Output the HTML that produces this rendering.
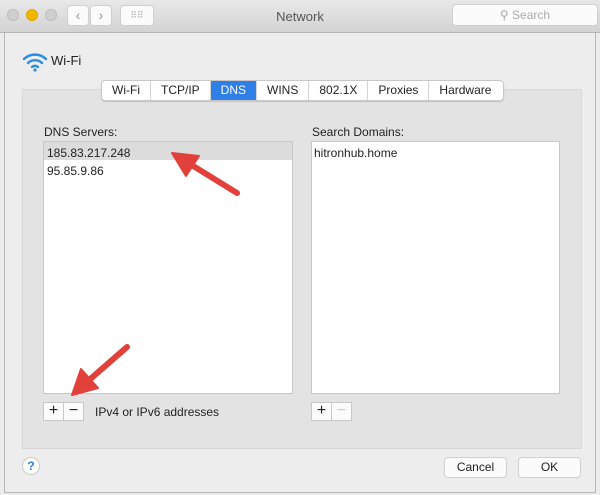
<!DOCTYPE html><html><head><style>
body{margin:0;width:600px;height:495px;overflow:hidden;background:#ececec;font-family:"Liberation Sans",sans-serif;font-size:12px;color:#222;position:relative}
.a{position:absolute}
.tb{left:0;top:0;width:600px;height:32px;background:linear-gradient(#e8e8e8,#d3d3d3);border-bottom:1px solid #b5b5b5}
.dot{width:12px;height:12px;border-radius:50%;top:9px;background:#cfcfcf;border:1px solid #bdbdbd;box-sizing:border-box}
.btn{background:#fbfbfb;border:1px solid #d0d0d0;border-radius:4px;box-sizing:border-box}
.sheet{left:4px;top:33px;width:592px;height:460px;background:#ededed;border:1px solid #b8b8b8;border-top:none;box-sizing:border-box}
.box{left:22px;top:89px;width:560px;height:360px;background:#e3e3e3;border:1px solid #d8d8d8;box-sizing:border-box}
.tabs{left:101px;top:80px;height:19px;display:flex;background:#fff;border:1px solid #c8c8c8;border-radius:4px;overflow:hidden;box-shadow:0 1px 1px rgba(0,0,0,.15)}
.tabs div{padding:0 10px;line-height:19px;border-right:1px solid #d5d5d5;font-size:12px}
.list{background:#fff;border:1px solid #c8c8c8;box-sizing:border-box}
.pm{width:21px;height:19px;background:#fbfbfb;border:1px solid #c8c8c8;box-sizing:border-box;text-align:center;line-height:16px;font-size:16px}
</style></head><body>
<div class="a tb"></div>
<div class="a dot" style="left:7px"></div>
<div class="a dot" style="left:26px;background:#f5b800;border-color:#dda200"></div>
<div class="a dot" style="left:45px"></div>
<div class="a btn" style="left:67px;top:5px;width:22px;height:21px;color:#999;text-align:center;line-height:19px;font-size:14px">&#8249;</div>
<div class="a btn" style="left:90px;top:5px;width:22px;height:21px;color:#999;text-align:center;line-height:19px;font-size:14px">&#8250;</div>
<div class="a btn" style="left:120px;top:5px;width:34px;height:21px;color:#aaa;text-align:center;line-height:19px;font-size:9px">⠿⠿</div>
<div class="a" style="left:0;width:600px;top:9px;text-align:center;color:#555;font-size:13px">Network</div>
<div class="a btn" style="left:452px;top:4px;width:146px;height:22px;color:#aaa;text-align:center;line-height:21px;font-size:12px">&#9906; Search</div>
<div class="a sheet"></div>
<svg class="a" style="left:22px;top:52px" width="26" height="20" viewBox="0 0 26 20"><g fill="none" stroke="#2a8ce0" stroke-width="2.4" stroke-linecap="round"><path d="M2 7a16 16 0 0 1 22 0"/><path d="M6 11a10 10 0 0 1 14 0"/><path d="M10 15a4.5 4.5 0 0 1 6 0"/></g><circle cx="13" cy="18" r="1.6" fill="#2a8ce0"/></svg>
<div class="a" style="left:51px;top:53px;font-size:13px">Wi-Fi</div>
<div class="a box"></div>
<div class="a tabs"><div>Wi-Fi</div><div>TCP/IP</div><div style="background:#2f7fe6;color:#fff">DNS</div><div>WINS</div><div>802.1X</div><div>Proxies</div><div style="border:none;padding:0 12px 0 10px">Hardware</div></div>
<div class="a" style="left:44px;top:125px">DNS Servers:</div>
<div class="a" style="left:312px;top:125px">Search Domains:</div>
<div class="a list" style="left:43px;top:141px;width:250px;height:253px"></div>
<div class="a" style="left:44px;top:142px;width:248px;height:18px;background:#dcdcdc"></div>
<div class="a" style="left:47px;top:146px">185.83.217.248</div>
<div class="a" style="left:47px;top:164px">95.85.9.86</div>
<div class="a list" style="left:311px;top:141px;width:249px;height:253px"></div>
<div class="a" style="left:314px;top:146px">hitronhub.home</div>
<div class="a pm" style="left:43px;top:402px">+</div>
<div class="a pm" style="left:63px;top:402px">−</div>
<div class="a" style="left:95px;top:405px">IPv4 or IPv6 addresses</div>
<div class="a pm" style="left:311px;top:402px">+</div>
<div class="a pm" style="left:331px;top:402px;color:#ccc">−</div>
<div class="a" style="left:22px;top:457px;width:18px;height:18px;border-radius:50%;background:#fff;border:1px solid #c8c8c8;box-sizing:border-box;color:#2a7de0;text-align:center;line-height:16px;font-size:12px;font-weight:bold">?</div>
<div class="a btn" style="left:444px;top:457px;width:63px;height:21px;text-align:center;line-height:19px">Cancel</div>
<div class="a btn" style="left:518px;top:457px;width:63px;height:21px;text-align:center;line-height:19px">OK</div>
<svg class="a" style="left:0;top:0" width="600" height="495"><g fill="#e2403a" stroke="#e2403a" stroke-linecap="round" stroke-linejoin="round"><line x1="237" y1="193" x2="190" y2="164" stroke-width="6"/><path d="M172 153L199 156L186 176Z" stroke-width="2"/><line x1="127" y1="347" x2="88" y2="381" stroke-width="6"/><path d="M72 395L81 369L98 388Z" stroke-width="2"/></g></svg>
</body></html>
